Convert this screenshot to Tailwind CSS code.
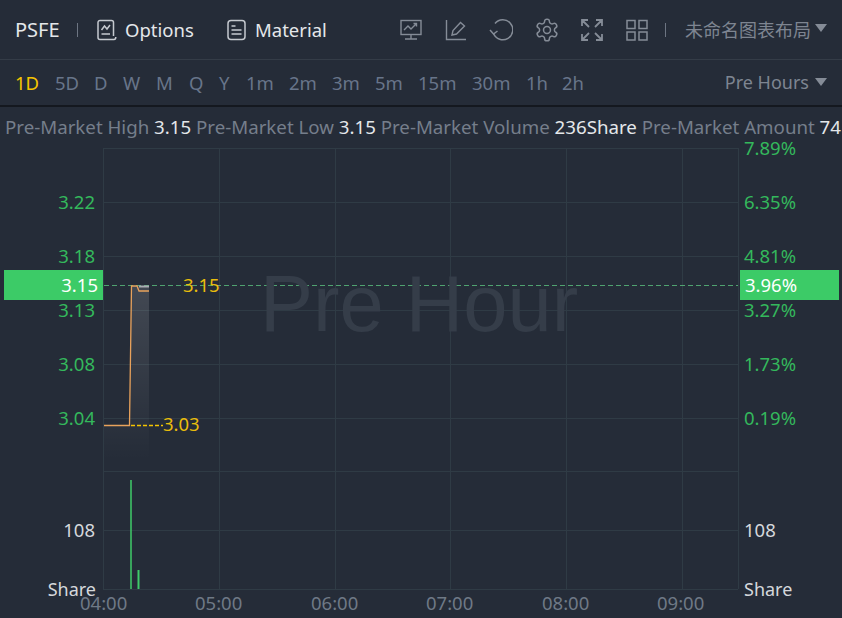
<!DOCTYPE html>
<html lang="en">
<head>
  <meta charset="UTF-8">
  <title>PSFE</title>
  <script src="https://cdn.jsdelivr.net/npm/@tailwindcss/browser@4"></script>
</head>
<body class="bg-[#252c38] w-[842px] h-[618px] overflow-hidden font-['Noto_Sans','Noto_Sans_CJK_SC',sans-serif]">
  <!-- top bar -->
  <div class="h-[60px] flex items-center border-b border-[#343c47] pl-[15px] text-[18.500px] text-[#e4e7ea]">
    <span class="w-[47px] text-[20px]">PSFE</span>
    <span class="w-px h-[14px] bg-[#6d7582] ml-[15px] mr-[19px]"></span>
    <svg class="w-[20px] h-[22px] mr-[8px]" viewBox="0 0 20 22" fill="none" stroke="#c5c9cf" stroke-width="1.5">
      <path d="M16.5 17V3.5a2 2 0 0 0-2-2H3a2 2 0 0 0-2 2v15a2 2 0 0 0 2 2h14c1 0 1.8-.8 1.8-2.5"/>
      <path d="M4.5 11l3-4 2.500 3 3-4M4.500 15h8.500"/>
    </svg>
    <span class="w-[69px]">Options</span>
    <svg class="w-[19px] h-[22px] ml-[33px] mr-[9px]" viewBox="0 0 19 22" fill="none" stroke="#c5c9cf" stroke-width="1.5">
      <rect x="1" y="1.500" width="17" height="19" rx="3"/>
      <path d="M4.500 7h4M4.500 11h10M4.500 15h10"/>
    </svg>
    <span class="w-[72px]">Material</span>
    <div class="flex items-center ml-[73px] gap-[23px]">
      <svg class="w-[22px] h-[22px]" viewBox="0 0 22 22" fill="none" stroke="#858c97" stroke-width="1.400">
        <rect x="1" y="1.500" width="20" height="14"/>
        <path d="M4 11l4-4 3 3 5-5M13.500 4.500h3v3M11 15.500v4M5 20h12"/>
      </svg>
      <svg class="w-[22px] h-[22px]" viewBox="0 0 22 22" fill="none" stroke="#858c97" stroke-width="1.400">
        <path d="M1.500 1v19.500H21"/>
        <path d="M7 16l1-4.500L15.500 3.500l4 3.500-8 8z"/>
      </svg>
      <svg class="w-[24px] h-[22px] ml-[-1px]" viewBox="0 0 24 22" fill="none" stroke="#858c97" stroke-width="1.500">
        <path d="M4.500 14.500A10 10 0 1 0 6 4.500"/>
        <path d="M1 11l3.500 4L8.500 12"/>
      </svg>
      <svg class="w-[26px] h-[26px] mx-[-2px]" viewBox="0 0 24 24" fill="none" stroke="#858c97" stroke-width="1.400">
        <path d="M12.220 2h-.44a2 2 0 0 0-2 2v.18a2 2 0 0 1-1 1.730l-.43.25a2 2 0 0 1-2 0l-.15-.08a2 2 0 0 0-2.730.73l-.22.38a2 2 0 0 0 .73 2.730l.15.1a2 2 0 0 1 1 1.720v.51a2 2 0 0 1-1 1.740l-.15.09a2 2 0 0 0-.73 2.730l.22.38a2 2 0 0 0 2.730.73l.15-.08a2 2 0 0 1 2 0l.43.25a2 2 0 0 1 1 1.730V20a2 2 0 0 0 2 2h.44a2 2 0 0 0 2-2v-.18a2 2 0 0 1 1-1.730l.43-.25a2 2 0 0 1 2 0l.15.08a2 2 0 0 0 2.730-.73l.22-.39a2 2 0 0 0-.73-2.730l-.15-.08a2 2 0 0 1-1-1.740v-.5a2 2 0 0 1 1-1.740l.15-.09a2 2 0 0 0 .73-2.730l-.22-.38a2 2 0 0 0-2.730-.73l-.15.08a2 2 0 0 1-2 0l-.43-.25a2 2 0 0 1-1-1.730V4a2 2 0 0 0-2-2z"/>
        <circle cx="12" cy="12" r="3.200"/>
      </svg>
      <svg class="w-[22px] h-[22px]" viewBox="0 0 22 22" fill="none" stroke="#858c97" stroke-width="1.800">
        <path d="M1 7V1h6M1 1l7 7M15 1h6v6M21 1l-7 7M1 15v6h6M1 21l7-7M15 21h6v-6M21 21l-7-7"/>
      </svg>
      <svg class="w-[22px] h-[22px]" viewBox="0 0 22 22" fill="none" stroke="#858c97" stroke-width="1.500">
        <rect x="1" y="1.500" width="8" height="8"/>
        <rect x="13" y="1.500" width="8" height="8"/>
        <rect x="1" y="13" width="8" height="8"/>
        <rect x="13" y="13" width="8" height="8"/>
      </svg>
    </div>
    <span class="w-px h-[14px] bg-[#6d7582] ml-[17px] mr-[19px]"></span>
    <span class="text-[18px] text-[#7e8591] whitespace-nowrap mt-[2px]">未命名图表布局</span>
    <span class="ml-[4px] mb-[4px] border-x-[6px] border-x-transparent border-t-[8px] border-t-[#858c97]"></span>
  </div>
  <!-- period bar -->
  <div class="h-[47px] flex items-center pl-[15px] pr-[15px] text-[18.500px] text-[#68758a] border-b-2 border-[#14181f]">
    <span class="text-[#f5c400] w-[40px]">1D</span>
    <span class="w-[39px]">5D</span>
    <span class="w-[29px]">D</span>
    <span class="w-[33px]">W</span>
    <span class="w-[33px]">M</span>
    <span class="w-[30px]">Q</span>
    <span class="w-[27px]">Y</span>
    <span class="w-[43px]">1m</span>
    <span class="w-[43px]">2m</span>
    <span class="w-[43px]">3m</span>
    <span class="w-[43px]">5m</span>
    <span class="w-[54px]">15m</span>
    <span class="w-[54px]">30m</span>
    <span class="w-[36px]">1h</span>
    <span>2h</span>
    <span class="ml-auto text-[18px] text-[#7e8591]">Pre Hours</span>
    <span class="ml-[6px] mb-[2px] border-x-[6px] border-x-transparent border-t-[8px] border-t-[#858c97]"></span>
  </div>
  <!-- pre market summary -->
  <div class="h-[40px] flex items-center pl-[5px] text-[18.700px] text-[#757e8b] whitespace-nowrap overflow-hidden">
    <span>Pre-Market High <span class="text-[#e4e7ea]">3.15</span> Pre-Market Low <span class="text-[#e4e7ea]">3.15</span> Pre-Market Volume <span class="text-[#e4e7ea]">236Share</span> Pre-Market Amount <span class="text-[#e4e7ea]">74</span></span>
  </div>
  <!-- chart canvas -->
  <div class="relative h-[471px] text-[18.500px] leading-[24px] whitespace-nowrap">
    <svg class="absolute left-0 top-0" width="842" height="471" viewBox="0 147 842 471" fill="none">
      <defs>
        <linearGradient id="fade" x1="0" y1="0" x2="0" y2="1">
          <stop offset="0" stop-color="#ffffff" stop-opacity=".17"/>
          <stop offset="1" stop-color="#ffffff" stop-opacity="0"/>
        </linearGradient>
      </defs>
      <g stroke="#2f3b45" stroke-width="1">
        <path d="M103 148.500H738M103 202.500H738M103 256.500H738M103 310.500H738M103 364.500H738M103 418.500H738M103 471.500H738M103 530.500H738M103 589.500H738"/>
        <path d="M103.500 148V589M219.500 148V589M335.500 148V589M450.500 148V589M566.500 148V589M682.500 148V589M738.500 148V589"/>
      </g>
      <path d="M104 425H130L131 286H149V460H104Z" fill="url(#fade)" opacity=".8"/>
      <path d="M104 285.500H738" stroke="#58b87a" stroke-width="1" stroke-dasharray="5 3" opacity=".85"/>
      <path d="M131 425.500H163" stroke="#f5c400" stroke-width="1.500" stroke-dasharray="4 2"/>
      <path d="M104 425.500H129.500L131.500 286H137L139 291H149" stroke="#e8a25c" stroke-width="1.300"/>
      <path d="M139 286.500H149" stroke="#a9adb2" stroke-width="2"/>
      <path d="M131 480V589" stroke="#3fcb69" stroke-width="1.500"/>
      <path d="M138.500 570V589" stroke="#3fcb69" stroke-width="2"/>
    </svg>

    <!-- current price tags -->
    <div class="absolute left-[4px] top-[123px] w-[99px] h-[30px] bg-[#3ccb67] text-white flex items-center justify-end pr-[5px]">3.15</div>
    <div class="absolute left-[740px] top-[123px] w-[99px] h-[30px] bg-[#3ccb67] text-white flex items-center pl-[5px]">3.96%</div>

    <!-- left axis -->
    <div class="absolute right-[747px] top-[43px] text-[#34b85c]">3.22</div>
    <div class="absolute right-[747px] top-[97px] text-[#34b85c]">3.18</div>
    <div class="absolute right-[747px] top-[151px] text-[#34b85c]">3.13</div>
    <div class="absolute right-[747px] top-[205px] text-[#34b85c]">3.08</div>
    <div class="absolute right-[747px] top-[259px] text-[#34b85c]">3.04</div>
    <div class="absolute right-[747px] top-[371px] text-[#d5d8dc]">108</div>
    <div class="absolute right-[746px] top-[430px] text-[18px] text-[#d5d8dc]">Share</div>

    <!-- right axis -->
    <div class="absolute left-[744px] top-[-11px] text-[#34b85c]">7.89%</div>
    <div class="absolute left-[744px] top-[43px] text-[#34b85c]">6.35%</div>
    <div class="absolute left-[744px] top-[97px] text-[#34b85c]">4.81%</div>
    <div class="absolute left-[744px] top-[151px] text-[#34b85c]">3.27%</div>
    <div class="absolute left-[744px] top-[205px] text-[#34b85c]">1.73%</div>
    <div class="absolute left-[744px] top-[259px] text-[#34b85c]">0.19%</div>
    <div class="absolute left-[744px] top-[371px] text-[#d5d8dc]">108</div>
    <div class="absolute left-[744px] top-[430px] text-[18px] text-[#d5d8dc]">Share</div>

    <!-- chart annotations -->
    <div class="absolute left-[183px] top-[126px] text-[#e9bd0c]">3.15</div>
    <div class="absolute left-[163px] top-[265px] text-[#e9bd0c]">3.03</div>
    <div class="absolute left-[260px] top-[112px] text-[79.500px] leading-[90px] text-[#353d49] font-['Liberation_Sans',sans-serif]">Pre Hour</div>

    <!-- time axis -->
    <div class="absolute left-[80px] top-[444px] text-[#6f7986]">04:00</div>
    <div class="absolute left-[195px] top-[444px] text-[#6f7986]">05:00</div>
    <div class="absolute left-[311px] top-[444px] text-[#6f7986]">06:00</div>
    <div class="absolute left-[426px] top-[444px] text-[#6f7986]">07:00</div>
    <div class="absolute left-[542px] top-[444px] text-[#6f7986]">08:00</div>
    <div class="absolute left-[657px] top-[444px] text-[#6f7986]">09:00</div>
  </div>
</body>
</html>
